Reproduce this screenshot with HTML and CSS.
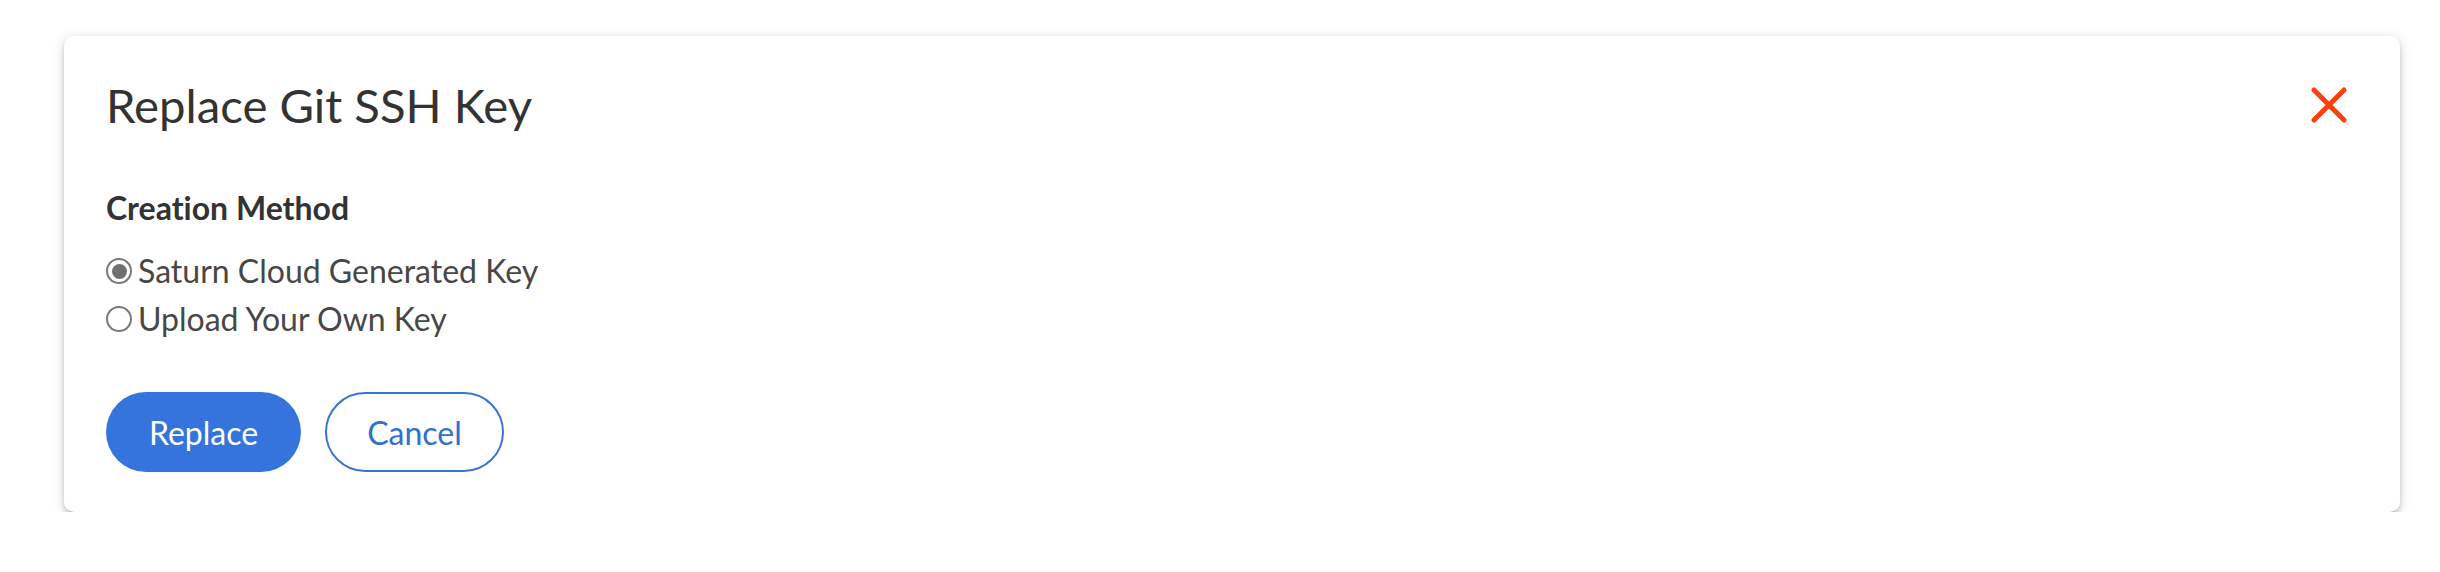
FILE: index.html
```html
<!DOCTYPE html>
<html lang="en">
<head>
<meta charset="utf-8">
<title>Replace Git SSH Key</title>
<link rel="stylesheet" href="styles.css">
</head>
<body>
<div class="modal">
  <div class="modal-header">
    <h2 class="modal-title">Replace Git SSH Key</h2>
    <button class="close-btn" aria-label="Close">
      <svg width="36" height="36" viewBox="0 0 36 36"><path d="M3 3 L33 33 M33 3 L3 33" stroke="#fc3f0c" stroke-width="5" stroke-linecap="round" fill="none"/></svg>
    </button>
  </div>
  <div class="field">
    <div class="field-label">Creation Method</div>
    <label class="radio-row"><span class="radio checked"></span><span class="radio-text">Saturn Cloud Generated Key</span></label>
    <label class="radio-row"><span class="radio"></span><span class="radio-text">Upload Your Own Key</span></label>
  </div>
  <div class="actions">
    <button class="btn btn-primary">Replace</button>
    <button class="btn btn-outline">Cancel</button>
  </div>
</div>
</body>
</html>
```
FILE: styles.css
```css
* { box-sizing: border-box; }
html, body { margin: 0; padding: 0; background: #ffffff; }
body {
  font-family: Lato, "Open Sans", sans-serif;
  font-variant-ligatures: no-common-ligatures;
}

.modal {
  margin: 36px 40px 0 64px;
  background: #fff;
  border-radius: 10px;
  box-shadow: 0 4px 5px rgba(0, 0, 0, 0.14), 0 6px 2px -4px rgba(0, 0, 0, 0.12), 0 2px 12px rgba(0, 0, 0, 0.16);
  padding: 41px 53px 40px 42px;
}

.modal-header {
  display: flex;
  align-items: center;
  justify-content: space-between;
}

.modal-title {
  margin: 0;
  font-size: 47.3px;
  line-height: 56px;
  font-weight: 400;
  color: #333333;
}

.close-btn {
  border: 0;
  background: none;
  padding: 0;
  width: 36px;
  height: 36px;
  display: flex;
}

.field { margin-top: 57px; display: flex; flex-direction: column; }

.field-label {
  font-size: 32px;
  line-height: 36px;
  font-weight: 700;
  color: #333333;
  margin-bottom: 21px;
}

.radio-row {
  display: flex;
  align-items: center;
  height: 48px;
}

.radio {
  width: 26px;
  height: 26px;
  border-radius: 50%;
  border: 2px solid #787878;
  margin-right: 6px;
  flex: none;
  display: flex;
  align-items: center;
  justify-content: center;
}

.radio.checked::after {
  content: "";
  width: 15px;
  height: 15px;
  border-radius: 50%;
  background: #6f6f6f;
}

.radio-text {
  font-size: 32px;
  line-height: 48px;
  color: #474747;
}

.actions {
  margin-top: 49px;
  display: flex;
  gap: 24px;
}

.btn {
  height: 80px;
  border-radius: 40px;
  font-family: Lato, "Open Sans", sans-serif;
  font-size: 32px;
  padding: 0;
  display: flex;
  align-items: center;
  justify-content: center;
}

.btn-primary {
  width: 195px;
  background: #3474dc;
  border: 0;
  color: #ffffff;
}

.btn-outline {
  width: 179px;
  background: #fff;
  border: 2px solid #3a74d6;
  color: #3070d0;
}
```
